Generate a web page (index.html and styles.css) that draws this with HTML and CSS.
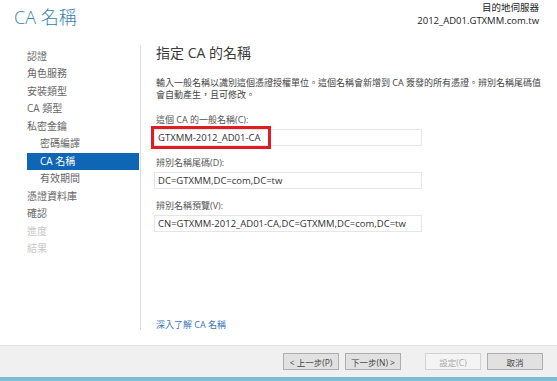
FILE: index.html
```html
<!DOCTYPE html>
<html>
<head>
    <title>CA 名稱</title>
    <link rel="stylesheet" href="styles.css">
</head>
<body>
    <div class="header">
        <h1>CA 名稱</h1>
        <div class="server">
            <div>目的地伺服器</div>
            <div>2012_AD01.GTXMM.com.tw</div>
        </div>
    </div>
    <div class="main">
        <ul class="nav">
            <li>認證</li>
            <li>角色服務</li>
            <li>安裝類型</li>
            <li>CA 類型</li>
            <li>私密金鑰</li>
            <li class="sub">密碼編譯</li>
            <li class="sub active">CA 名稱</li>
            <li class="sub">有效期間</li>
            <li>憑證資料庫</li>
            <li>確認</li>
            <li class="off">進度</li>
            <li class="off">結果</li>
        </ul>
        <div class="content">
            <h2>指定 CA 的名稱</h2>
            <p class="desc">輸入一般名稱以識別這個憑證授權單位。這個名稱會新增到 CA 簽發的所有憑證。辨別名稱尾碼值<br>會自動產生，且可修改。</p>
            <div class="field">
                <label for="cn">這個 CA 的一般名稱(C):</label>
                <div class="box">
                    <input type="text" id="cn" value="GTXMM-2012_AD01-CA">
                    <span class="mark"></span>
                </div>
            </div>
            <div class="field">
                <label for="suffix">辨別名稱尾碼(D):</label>
                <div class="box">
                    <input type="text" id="suffix" value="DC=GTXMM,DC=com,DC=tw">
                </div>
            </div>
            <div class="field">
                <label for="preview">辨別名稱預覽(V):</label>
                <div class="box">
                    <input type="text" id="preview" value="CN=GTXMM-2012_AD01-CA,DC=GTXMM,DC=com,DC=tw">
                </div>
            </div>
            <a href="#" class="more">深入了解 CA 名稱</a>
        </div>
    </div>
    <div class="footer">
        <button>&lt; 上一步(P)</button>
        <button>下一步(N) &gt;</button>
        <button class="gap" disabled>設定(C)</button>
        <button>取消</button>
    </div>
    <div class="stripe"></div>
</body>
</html>
```

FILE: styles.css
```css
* {
    margin: 0;
    padding: 0;
    box-sizing: border-box;
}
body {
    font-family: 'Open Sans', 'Noto Sans CJK TC', sans-serif;
    background: #ffffff;
    color: #333;
    width: 557px;
    height: 381px;
    overflow: hidden;
}
.header {
    height: 40px;
    display: flex;
    justify-content: space-between;
    padding: 0 18px 0 14px;
}
.header h1 {
    font-size: 18px;
    font-weight: 300;
    line-height: 22px;
    margin-top: 6px;
    color: #3582ab;
}
.server {
    text-align: right;
    font-size: 9.5px;
    line-height: 13px;
    color: #222;
    padding-top: 1px;
}
.main {
    height: 305px;
    display: flex;
}
.nav {
    list-style: none;
    width: 141px;
    margin: 5px 0 15px;
    padding-top: 2.5px;
    border-right: 1px solid #dcdcdc;
}
.nav li {
    height: 17.5px;
    line-height: 17.5px;
    font-size: 10px;
    color: #666;
    margin-left: 27px;
    width: 112px;
}
.nav li.sub {
    padding-left: 13px;
}
.nav li.active {
    background: #0f66b5;
    color: #fff;
}
.nav li.off {
    color: #c8c8c8;
}
.content {
    flex: 1;
    display: flex;
    flex-direction: column;
    padding: 0 0 14px 15px;
}
.content h2 {
    font-size: 14px;
    font-weight: 400;
    line-height: 18px;
    margin-top: 4px;
    color: #3a3a3a;
}
.desc {
    font-size: 9px;
    line-height: 11.5px;
    margin-top: 15px;
    color: #444;
}
.field {
    margin-top: 11px;
    width: 268px;
}
.desc + .field {
    margin-top: 14px;
}
.field label {
    display: block;
    font-size: 9px;
    line-height: 12px;
    color: #555;
    margin-bottom: 3px;
}
.box {
    position: relative;
    margin-left: -2px;
}
.box input {
    display: block;
    width: 268px;
    height: 17px;
    border: 1px solid #e6e6e6;
    background: #fff;
    padding: 0 3px;
    font-family: 'Open Sans', sans-serif;
    font-size: 9.5px;
    color: #333;
    outline: none;
}
.mark {
    position: absolute;
    left: -3px;
    top: -3px;
    width: 120px;
    height: 23px;
    border: 3px solid #e01c24;
}
.more {
    margin-top: auto;
    font-size: 9px;
    line-height: 12px;
    color: #3b76b8;
    text-decoration: none;
}
.footer {
    height: 32px;
    background: #f0f0f0;
    border-top: 1px solid #e2e2e2;
    display: flex;
    justify-content: flex-end;
    align-items: center;
    gap: 6px;
    padding-right: 14px;
}
.footer button {
    width: 56px;
    height: 17px;
    background: #e1e1e1;
    border: 1px solid #adadad;
    font-family: 'Open Sans', 'Noto Sans CJK TC', sans-serif;
    font-size: 8.5px;
    color: #444;
}
.footer button.gap {
    margin-left: 18px;
}
.footer button:disabled {
    background: #f4f4f4;
    border-color: #d2d2d2;
    color: #a8a8a8;
}
.stripe {
    height: 4px;
    background: #7fbad6;
}
```
